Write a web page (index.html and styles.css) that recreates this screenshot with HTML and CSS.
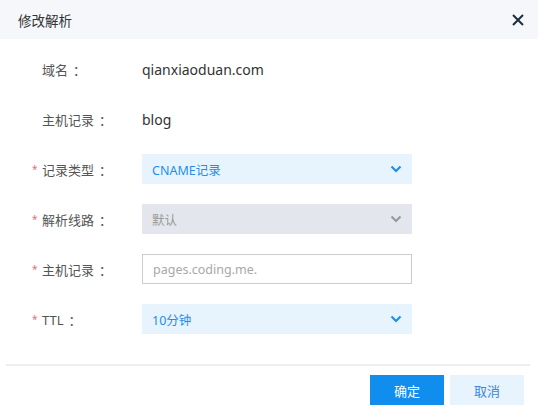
FILE: index.html
```html
<!DOCTYPE html>
<html lang="zh">
<head>
<meta charset="utf-8">
<title>修改解析</title>
<link rel="stylesheet" href="styles.css">
</head>
<body>
<div class="dialog">
  <div class="header">
    <span class="title">修改解析</span>
    <svg class="close" width="12" height="12" viewBox="0 0 12 12"><path d="M1 1L11 11M11 1L1 11" stroke="#1f2d3d" stroke-width="2" fill="none"/></svg>
  </div>
  <div class="body">
    <div class="row">
      <div class="label">域名<span class="colon">：</span></div>
      <div class="value">qianxiaoduan.com</div>
    </div>
    <div class="row">
      <div class="label">主机记录<span class="colon">：</span></div>
      <div class="value">blog</div>
    </div>
    <div class="row">
      <div class="label req">记录类型<span class="colon">：</span></div>
      <div class="field select">
        <span>CNAME记录</span>
        <svg class="chev" width="12" height="8" viewBox="0 0 12 8"><path d="M1.5 1.5L6 6L10.5 1.5" stroke="#1e8ef0" stroke-width="2.2" fill="none"/></svg>
      </div>
    </div>
    <div class="row">
      <div class="label req">解析线路<span class="colon">：</span></div>
      <div class="field select disabled">
        <span>默认</span>
        <svg class="chev" width="12" height="8" viewBox="0 0 12 8"><path d="M1.5 1.5L6 6L10.5 1.5" stroke="#9a9a9a" stroke-width="2.2" fill="none"/></svg>
      </div>
    </div>
    <div class="row">
      <div class="label req">主机记录<span class="colon">：</span></div>
      <div class="field input"><span>pages.coding.me.</span></div>
    </div>
    <div class="row">
      <div class="label req">TTL<span class="colon">：</span></div>
      <div class="field select">
        <span>10分钟</span>
        <svg class="chev" width="12" height="8" viewBox="0 0 12 8"><path d="M1.5 1.5L6 6L10.5 1.5" stroke="#1e8ef0" stroke-width="2.2" fill="none"/></svg>
      </div>
    </div>
  </div>
  <div class="footer">
    <button class="btn primary">确定</button>
    <button class="btn cancel">取消</button>
  </div>
</div>
</body>
</html>
```
FILE: styles.css
```css
* { box-sizing: border-box; }
body {
  margin: 0;
  background: #fff;
  font-family: "Noto Sans", "Noto Sans CJK SC", sans-serif;
}
.dialog {
  width: 538px;
  height: 417px;
  background: #fff;
}
.header {
  height: 39px;
  background: #f5f7fb;
  display: flex;
  align-items: center;
  justify-content: space-between;
  padding: 0 14px 0 18px;
}
.title {
  font-size: 13.5px;
  color: #333;
}
.close { display: block; }
.body {
  padding: 15px 0 0 0;
  display: flex;
  flex-direction: column;
  gap: 20px;
}
.row {
  display: flex;
  align-items: center;
  height: 30px;
}
.label {
  width: 142px;
  padding-left: 42px;
  font-size: 13px;
  color: #555;
  position: relative;
}
.colon {
  padding-left: 5px;
}
.label.req::before {
  content: "*";
  position: absolute;
  left: 32px;
  top: 2px;
  color: #f06a78;
  font-size: 10px;
}
.value {
  font-size: 14px;
  color: #333;
}
.field {
  width: 270px;
  height: 30px;
  display: flex;
  align-items: center;
  justify-content: space-between;
  padding: 0 10px 0 10px;
  font-size: 12.5px;
}
.select {
  background: #e8f4fd;
  color: #1e8ef0;
}
.select.disabled {
  background: #e3e6ec;
  color: #9a9a9a;
}
.input {
  border: 1px solid #cccccc;
  background: #fff;
  color: #a8a8a8;
  padding-left: 10px;
}
.chev { display: block; }
.footer {
  margin: 30px 8px 0 6px;
  border-top: 2px solid #eeeeee;
  display: flex;
  justify-content: flex-end;
  gap: 6px;
  padding: 9px 6px 0 0;
}
.btn {
  width: 74px;
  height: 30px;
  border: none;
  font-family: "Noto Sans", "Noto Sans CJK SC", sans-serif;
  font-size: 13px;
  padding: 0;
}
.primary {
  background: #118ded;
  color: #fff;
}
.cancel {
  background: #e8f4fd;
  color: #3a86e0;
}
```
